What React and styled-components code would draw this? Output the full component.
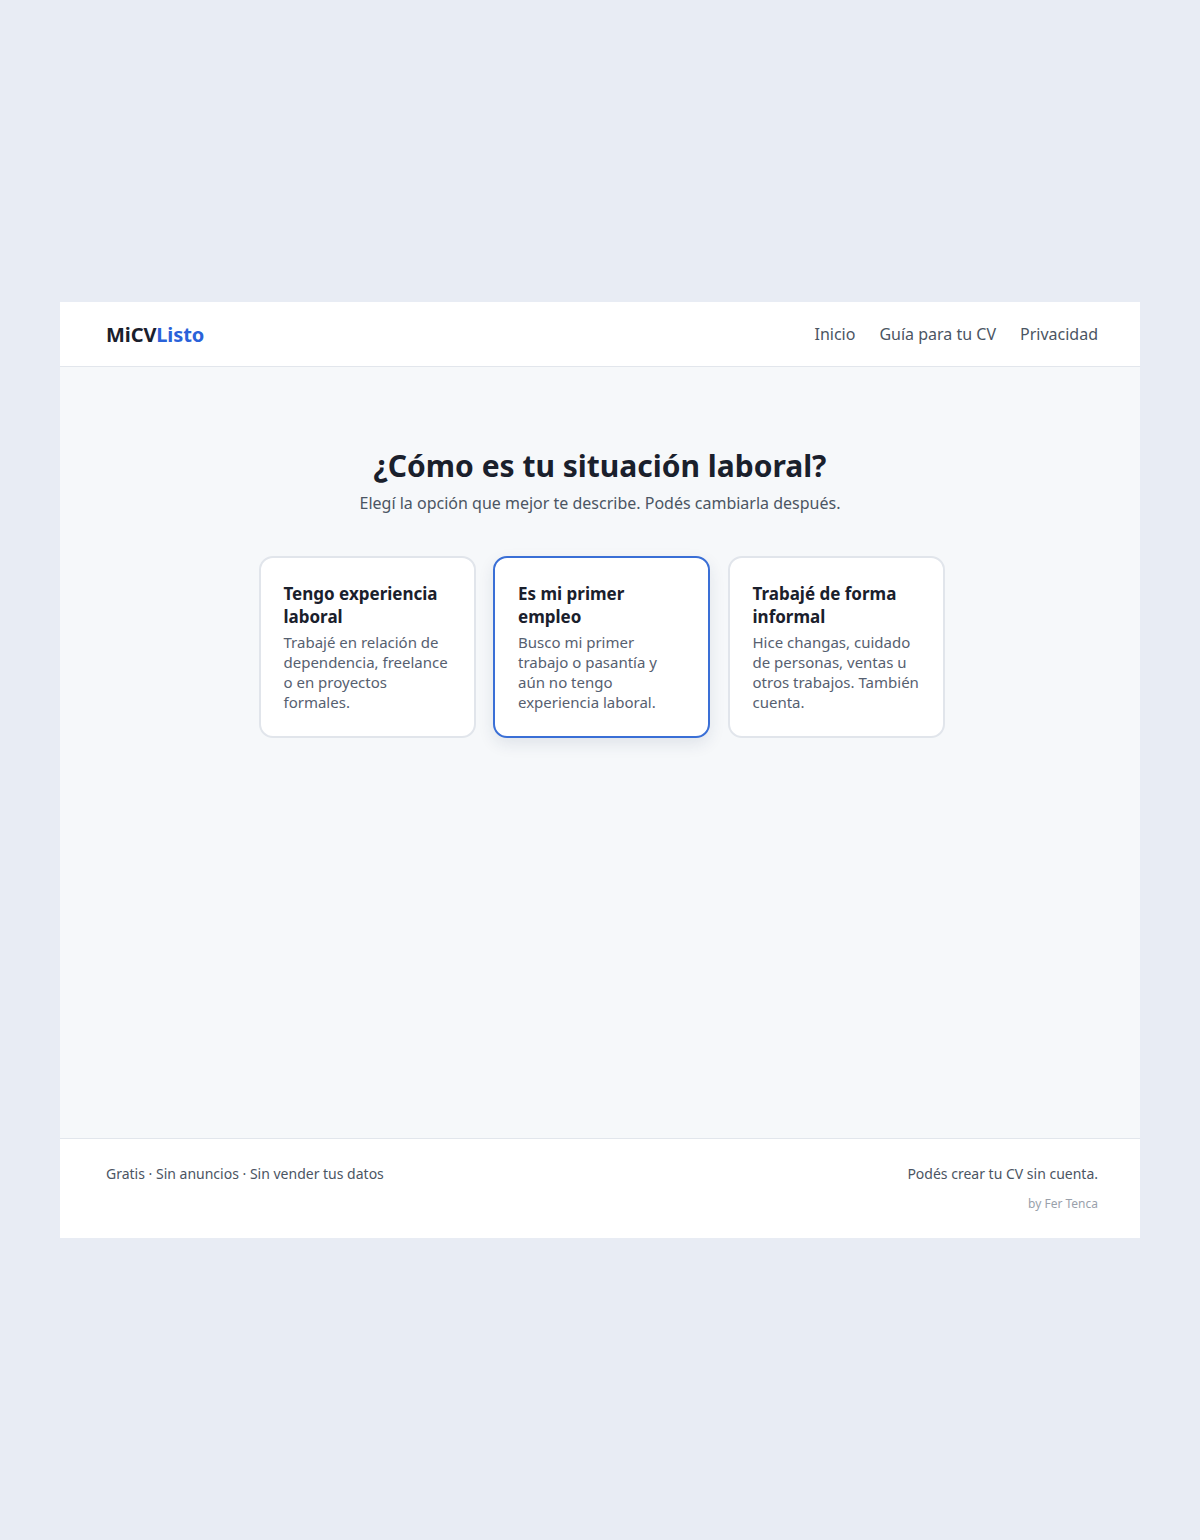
import React, { useState } from "react";
import styled, { createGlobalStyle } from "styled-components";

const Global = createGlobalStyle`
  * { box-sizing: border-box; }
  html, body { margin: 0; padding: 0; }
  body {
    background: #e8ecf4;
    font-family: "Noto Sans", "Open Sans", sans-serif;
    color: #1a202c;
  }
`;

const Page = styled.div`
  min-height: 1540px;
  display: flex;
  align-items: center;
  justify-content: center;
`;

const Panel = styled.div`
  width: 1080px;
  height: 936px;
  display: flex;
  flex-direction: column;
  background: #f6f8fa;
`;

const Header = styled.header`
  height: 65px;
  padding: 0 42px 0 46px;
  background: #fff;
  border-bottom: 1px solid #e2e6ec;
  display: flex;
  align-items: center;
  justify-content: space-between;
`;

const Logo = styled.div`
  font-size: 20px;
  font-weight: 700;
  color: #1a202c;
  letter-spacing: -0.1px;
  span { color: #2a62d9; }
`;

const Nav = styled.nav`
  display: flex;
  gap: 24px;
`;

const NavLink = styled.a`
  font-size: 16px;
  color: #4b5563;
  text-decoration: none;
`;

const Main = styled.main`
  flex: 1;
  padding-top: 80px;
  display: flex;
  flex-direction: column;
  align-items: center;
`;

const Title = styled.h1`
  margin: 0;
  font-size: 30px;
  line-height: 38px;
  font-weight: 700;
  color: #1a202c;
`;

const Subtitle = styled.p`
  margin: 6px 0 0;
  font-size: 16px;
  line-height: 24px;
  color: #4b5563;
`;

const Cards = styled.div`
  margin: 41px 0 0 3px;
  display: grid;
  grid-template-columns: repeat(3, 217px);
  gap: 17.5px;
`;

const Card = styled.button`
  text-align: left;
  font-family: inherit;
  background: #fff;
  border: ${p => (p.$active ? "2px solid #3a6fd6" : "2px solid #e1e5eb")};
  border-radius: 14px;
  padding: 24px 23px 23px;
  height: 182px;
  cursor: pointer;
  box-shadow: ${p => (p.$active ? "0 6px 16px rgba(30, 50, 90, 0.10)" : "none")};
  display: flex;
  flex-direction: column;
  align-items: flex-start;
`;

const CardTitle = styled.div`
  font-size: 17px;
  line-height: 23px;
  font-weight: 700;
  color: #1a202c;
`;

const CardText = styled.div`
  margin-top: 4px;
  font-size: 15px;
  line-height: 20px;
  color: #566070;
`;

const Footer = styled.footer`
  height: 100px;
  background: #fff;
  border-top: 1px solid #e2e6ec;
  padding: 25px 42px 0 46px;
  display: flex;
  justify-content: space-between;
  align-items: flex-start;
`;

const FootText = styled.div`
  font-size: 14px;
  line-height: 20px;
  color: #4b5563;
`;

const FootRight = styled.div`
  display: flex;
  flex-direction: column;
  align-items: flex-end;
  gap: 12px;
`;

const Credit = styled.div`
  font-size: 12px;
  line-height: 16px;
  color: #9aa1ab;
`;

const options = [
  {
    title: "Tengo experiencia laboral",
    text: "Trabajé en relación de dependencia, freelance o en proyectos formales.",
  },
  {
    title: "Es mi primer empleo",
    text: "Busco mi primer trabajo o pasantía y aún no tengo experiencia laboral.",
  },
  {
    title: "Trabajé de forma informal",
    text: "Hice changas, cuidado de personas, ventas u otros trabajos. También cuenta.",
  },
];

export default function App() {
  const [sel, setSel] = useState(1);
  return (
    <>
      <Global />
      <Page>
        <Panel>
          <Header>
            <Logo>
              MiCV<span>Listo</span>
            </Logo>
            <Nav>
              <NavLink href="#">Inicio</NavLink>
              <NavLink href="#">Guía para tu CV</NavLink>
              <NavLink href="#">Privacidad</NavLink>
            </Nav>
          </Header>
          <Main>
            <Title>¿Cómo es tu situación laboral?</Title>
            <Subtitle>Elegí la opción que mejor te describe. Podés cambiarla después.</Subtitle>
            <Cards>
              {options.map((o, i) => (
                <Card key={o.title} $active={sel === i} onClick={() => setSel(i)}>
                  <CardTitle>{o.title}</CardTitle>
                  <CardText>{o.text}</CardText>
                </Card>
              ))}
            </Cards>
          </Main>
          <Footer>
            <FootText>Gratis · Sin anuncios · Sin vender tus datos</FootText>
            <FootRight>
              <FootText>Podés crear tu CV sin cuenta.</FootText>
              <Credit>by Fer Tenca</Credit>
            </FootRight>
          </Footer>
        </Panel>
      </Page>
    </>
  );
}
